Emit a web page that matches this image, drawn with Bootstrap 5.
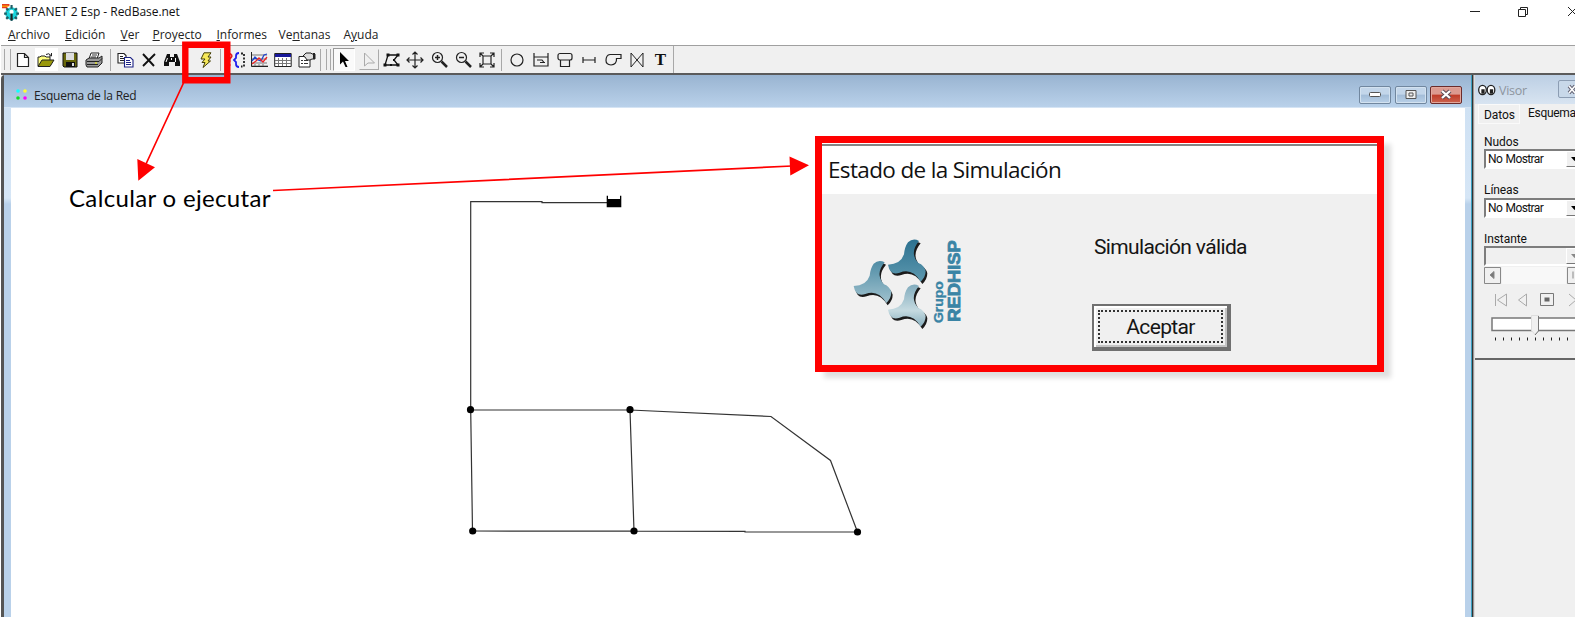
<!DOCTYPE html>
<html lang="es">
<head>
<meta charset="utf-8">
<title>EPANET 2 Esp - RedBase.net</title>
<link href="https://cdn.jsdelivr.net/npm/bootstrap@5.3.0/dist/css/bootstrap.min.css" rel="stylesheet">
<style>
body{width:1575px;height:627px;overflow:hidden;background:#fff;color:#111;font:12px/1 "Open Sans","Noto Sans",sans-serif}
svg{display:block;flex:none;overflow:visible}
.shell{height:617px;padding-left:1px}
.titlebar{height:25px;padding:0 3px 1px 1px;font-size:12px}
.titlebar .cap{letter-spacing:-.03px;margin-left:5px}
.menubar{height:20px;padding-left:7px;color:#222;font-size:12px}
.menubar span{display:block;flex:none;white-space:nowrap}
.toolbar-strip{height:28px;background:#f0f0f0;border-top:1px solid #a0a0a0;padding-left:3px}
.grips{width:7px;height:21px;border-left:1px solid #a8a8a8;border-right:1px solid #a8a8a8;flex:none}
.slot{width:23.6px;height:23px;display:flex;align-items:center;justify-content:center;flex:none}
.slot.w{width:24px}
.vsep{width:1px;height:22px;background:#a8a8a8;flex:none}
.mdi{height:544px;border-top:2px solid #5b5b5b;background:#f0f0f0}
.child{width:1471px;border-left:3px solid #555;background:#b9d1ea;box-shadow:inset 1px 0 #dfeaf5;border-top-left-radius:4px}
.child-title{height:33px;background:linear-gradient(#99b4d1,#b9d1ea);padding:0 9px 0 12px;border-bottom:1px solid #d5e4f4}
.child-title .cap{font-size:12px;letter-spacing:-.22px;color:#222;margin-left:6px;padding-top:9px}
.mdibtn{width:32px;height:18px;border:1px solid #71879f;border-radius:2px;background:linear-gradient(#c3d6ea 45%,#a3bdd8 50%,#b9d0e8);box-shadow:inset 0 0 0 1px #d3e2f0;display:flex;align-items:center;justify-content:center}
.mdibtn.x{background:linear-gradient(#dc9a90 45%,#bf3b28 50%,#cc6450);border-color:#6b2b2b;box-shadow:inset 0 0 0 1px #e2a79c}
.frame{padding:0 6px 0 7px;background:linear-gradient(#cfe1f3 0,#d6e6f6 90px,#b9d1ea 96px)}
.sheet{background:#fff}
.divider{width:4px;background:linear-gradient(90deg,#3aa0c0 0 1px,#333 1px 2.500px,#999 2.500px 3px,#ddd 3px);flex:none}
.dock{width:100px;font-family:Roboto,"Liberation Sans",sans-serif;font-size:12px;letter-spacing:-.08px;color:#111}
.visor{height:285px;border-bottom:2px solid #666;padding-left:3px;overflow:hidden}
.visor>*{width:107px}
.vtitle{height:29px;padding-top:1px;background:linear-gradient(#bccfe4,#d8e4f1);margin-left:-3px;padding-left:3px;color:#8d959e;font:12.5px "Open Sans",sans-serif;letter-spacing:-.3px}
.vclose{width:26px;height:18px;border:1px solid #8c9db3;border-radius:2px;background:#c8d8e9;margin-left:31px;margin-top:-2px}
.lbl{height:13px;padding-left:6px;white-space:nowrap}
.combo{height:20px;width:101px;margin-left:6px;border:2px solid;border-color:#7d7d7d #fff #fff #7d7d7d;background:#fff;padding-left:2px}
.combo span{letter-spacing:-.6px;word-spacing:1px;white-space:nowrap}
.combo.off{background:#f0f0f0}
.dropbtn{width:17px;background:#f0f0f0;border:1px solid;border-color:#fff #777 #777 #fff;margin-left:auto;flex:none}
.overlay-art{position:absolute;left:0;top:0;z-index:3;pointer-events:none}
.callout-label{position:absolute;left:69px;top:184px;z-index:4;font:24px/28px Lato,sans-serif;letter-spacing:.34px;color:#000;white-space:nowrap}
.simbox{position:absolute;z-index:4;left:815px;top:136px;width:569px;height:236px;border:7px solid #f00;background:#f0f0f0;box-shadow:8px 7px 5px -1px rgba(0,0,0,.13)}
.simtitle{height:51px;background:linear-gradient(#fff 1px,#858585 1px 3px,#fff 3px);padding:3px 0 0 6px;font-size:22.5px;letter-spacing:-.64px}
.simfont{font-family:Roboto,"Liberation Sans",sans-serif;font-size:21px;letter-spacing:-.65px;color:#151515}
.okbtn{width:139px;height:47px;border:2px solid #707070;border-right-width:4px;border-bottom-width:4px;border-radius:0;padding:4px;background:#f0f0f0;box-shadow:inset 2px 2px #fff,inset -2px -2px #c4c4c4}
.okbtn span{border:2px dotted #333;width:100%;height:100%;padding-top:2px}
</style>
</head>
<body class="position-relative">
<main class="shell d-flex flex-column">
  <header class="titlebar d-flex align-items-center">
    <svg width="17" height="17" viewBox="0 0 16 16"><circle cx="9" cy="9" r="6" fill="#19c5cc"/><path d="M9 1v15M2 9h14M4 4l10 10M14 4 4 14" stroke="#215d65" stroke-width="2"/><circle cx="9" cy="9" r="4.500" fill="#19d5dc"/><circle cx="9" cy="7.500" r="2" fill="#fff"/><path d="M9 9v6" stroke="#222" stroke-width="2"/><path d="M0 1h7M0 3h5" stroke="#e53b20" stroke-width="2"/><path d="M0 2h6" stroke="#ffc400"/></svg>
    <span class="cap">EPANET 2 Esp - RedBase.net</span>
    <svg class="ms-auto" width="102" height="14" viewBox="0 0 102 14" fill="none" stroke="#222"><path d="M0 6.5h10M48.500 4.500h7v7h-7zM50.500 4.500v-2h7v7h-2M98 2l9 9M107 2l-9 9"/></svg>
  </header>
  <nav class="menubar d-flex align-items-center">
    <span style="width:57px"><u>A</u>rchivo</span><span style="width:55.500px"><u>E</u>dición</span><span style="width:32px"><u>V</u>er</span><span style="width:64px"><u>P</u>royecto</span><span style="width:62px"><u>I</u>nformes</span><span style="width:65px">Ve<u>n</u>tanas</span><span>A<u>y</u>uda</span>
  </nav>
  <div class="toolbar-strip d-flex align-items-center">
    <div class="grips"></div>
    <div class="slot"><svg width="16" height="16" viewBox="0 0 16 16" fill="#fff" stroke="#222"><path d="M2.500 1.500h7l4 4v9h-11zM9.500 1.500v4h4" stroke-width="1.2"/></svg></div>
    <div class="slot bg-white"><svg width="18" height="16" viewBox="0 0 18 16"><path d="M1 14V5h2l1-1h4l1 1h4v3" fill="#ffff80" stroke="#222"/><path d="M1 14.500 5 8h12l-4 6.500z" fill="#99980a" stroke="#222"/><path d="M9 2.500q3-2 5 1M14.500 1v3H12" fill="none" stroke="#222"/></svg></div>
    <div class="slot"><svg width="16" height="16" viewBox="0 0 16 16"><path d="M1 1h14v14H2l-1-1z" fill="#68670a" stroke="#111"/><path d="M4 1h8v7H4z" fill="#ddd"/><path d="M4 10h9v5H4z" fill="#111"/><path d="M10 11h2v3h-2z" fill="#ddd"/></svg></div>
    <div class="slot"><svg width="18" height="16" viewBox="0 0 18 16"><path d="m6 1 8 0-2 6H4z" fill="#fff" stroke="#222"/><path d="M7 3h5M6 5h5" stroke="#333"/><path d="M1 8l3-2h10l3-2v7l-4 4H2l-1-2z" fill="#999" stroke="#222"/><path d="M2 9.500h12l3-3M2 12.500h11" stroke="#222" fill="none"/><path d="M10 11h2" stroke="#ff0"/></svg></div>
    <div class="vsep" style="margin:0 2px 0 5px"></div>
    <div class="slot"><svg width="17" height="16" viewBox="0 0 17 16" fill="#fff" stroke-width="1.1"><path d="M1 1.500h6l2 2V11H1z" stroke="#222"/><path d="M3 4.500h3M3 6.500h4M3 8.500h4" stroke="#222"/><path d="M7.500 5.500h6l2.500 2.500v7H7.500z" stroke="#1d2385"/><path d="M9 8.500h4M9 10.500h5M9 12.500h5" stroke="#1d2385"/></svg></div>
    <div class="slot"><svg width="16" height="16" viewBox="0 0 16 16" stroke="#111" stroke-width="1.9"><path d="M2 2 13 14M14 2 2 14"/></svg></div>
    <div class="slot"><svg width="18" height="16" viewBox="0 0 18 16"><path d="M4 2h3v3h4V2h3l3 8v4h-5v-4H6v4H1v-4z" fill="#111"/><path d="M4.500 6 3 10M12.500 6v4M8.500 6v2" stroke="#fff"/></svg></div>
    <div class="slot" style="margin-left:10px"><svg width="16" height="16" viewBox="0 0 16 16"><path d="M6 .8h7L10 5h3l-3 4h2.500L5 15.500 7 10.500H4L7 7H3z" fill="#f7e95a" stroke="#443f08"/></svg></div>
    <div class="vsep" style="margin:0 2px"></div>
    <div class="slot w"><svg width="22" height="16" viewBox="0 0 22 16" fill="none" stroke-width="1.8"><path d="M2.500 4q1-3 4-2 3 2-1 5v3M5.500 12v2" stroke="#e22020"/><path d="M15 1q-3 0-3 3v2l-2 2 2 2v2q0 3 3 3" stroke="#2020ee"/><path d="M17 1.500h3v13h-3" stroke="#222" stroke-dasharray="2 1.500"/></svg></div>
    <div class="slot w"><svg width="18" height="16" viewBox="0 0 18 16" fill="none"><path d="M1.500 0v14H18M1 3h16M1 7h16M1 11h16M5 12v3M9 12v3M13 12v3" stroke="#777"/><path d="M1.500 0v14.500H18" stroke="#222"/><path d="m2 9 3-4 3 3 3 1 3-6 3-1" stroke="#24c" stroke-width="1.300"/><path d="m2 12 4-3 3-3 4 4 4-5" stroke="#e22" stroke-width="1.300"/></svg></div>
    <div class="slot w"><svg width="18" height="16" viewBox="0 0 18 16"><path d="M.7 1.500h16.500v13H.7z" fill="#fff" stroke="#222"/><path d="M1 2h16v3H1z" fill="#18189a"/><path d="M4.500 6v8M8.500 6v8M12.500 6v8M1 8.500h16M1 11.500h16" stroke="#777"/></svg></div>
    <div class="slot w"><svg width="18" height="16" viewBox="0 0 18 16"><path d="M1 4.500h11V15H1z" fill="#fff" stroke="#222"/><path d="M3 8.500h2M6 8.500h4M3 11.500h2M6 11.500h4" stroke="#333"/><path d="M5 4 8 1h5l1 1h3v5h-3l-2 1H9L7 5z" fill="#ddd" stroke="#222"/><path d="M15 1h2v6h-2z" fill="#222"/></svg></div>
    <div class="vsep" style="margin-left:1px"></div>
    <div class="grips" style="width:5px;margin:0 2px 0 5px"></div>
    <div class="slot" style="background:#fafafa;border:1px solid;border-color:#999 #fff #fff #999;width:22px"><svg width="12" height="16" viewBox="0 0 12 16"><path d="M2 0v12.500l3-3L7.500 15h2L7 9h4z" fill="#000"/></svg></div>
    <div class="slot" style="width:20px;height:21px;margin:0 1px 0 4px;border:1px solid;border-color:#f0f0f0 #aaa #aaa #f0f0f0"><svg width="12" height="16" viewBox="0 0 12 16"><path d="M1.500 1v13L5 11h6.500z" fill="none" stroke="#aaa"/></svg></div>
    <div class="slot"><svg width="17" height="16" viewBox="0 0 17 16" fill="none" stroke="#111" stroke-width="1.300"><path d="M5 3h10l-4 5 4 5H2L5 3"/><path d="M3.500 1.500h3v3h-3zM13.500 1.500h3v3h-3zM.5 11.500h3v3h-3zM13.500 11.500h3v3h-3zM10 7h2v2h-2zM7 12h2v2H7z" fill="#111" stroke="none"/></svg></div>
    <div class="slot w"><svg width="18" height="18" viewBox="0 0 18 18" fill="none" stroke="#222" stroke-width="1.200"><path d="M1 9h16M9 1v16M6.500 3.500 9 1l2.500 2.500M6.500 14.500 9 17l2.500-2.500M3.500 6.500 1 9l2.500 2.500M14.500 6.500 17 9l-2.500 2.500"/></svg></div>
    <div class="slot w"><svg width="17" height="17" viewBox="0 0 17 17" fill="none" stroke="#222"><circle cx="6.500" cy="6.500" r="5" stroke-width="1.200"/><path d="M4 6.500h5M6.500 4v5" stroke-width="1.500"/><path d="m10.500 10.500 5.500 5.500" stroke-width="2.500"/></svg></div>
    <div class="slot w"><svg width="17" height="17" viewBox="0 0 17 17" fill="none" stroke="#222"><circle cx="6.500" cy="6.500" r="5" stroke-width="1.200"/><path d="M4 6.500h5" stroke-width="1.500"/><path d="m10.500 10.500 5.500 5.500" stroke-width="2.500"/></svg></div>
    <div class="slot w"><svg width="16" height="16" viewBox="0 0 16 16" fill="none" stroke="#222" stroke-width="1.200"><path d="M4 4h8v8H4zM1 5V1h4M11 1h4v4M15 11v4h-4M5 15H1v-4M1 1l3 3M15 1l-3 3M1 15l3-3M15 15l-3-3"/></svg></div>
    <div class="vsep" style="margin:0 3px 0 2px"></div>
    <div class="slot w"><svg width="14" height="14" viewBox="0 0 14 14" fill="none" stroke="#222"><circle cx="7" cy="7" r="6" stroke-width="1.200"/></svg></div>
    <div class="slot w"><svg width="16" height="14" viewBox="0 0 16 14" fill="none" stroke="#222" stroke-width="1.200"><path d="M1 0v13h14V0M1 4h14M4 7h5l2 2.500M7 9.500h5"/></svg></div>
    <div class="slot w"><svg width="16" height="16" viewBox="0 0 16 16" fill="none" stroke="#222" stroke-width="1.200"><rect x="1" y="1.500" width="14" height="6.500" rx="2"/><path d="M3.500 8v6.500h9V8"/></svg></div>
    <div class="slot w"><svg width="14" height="8" viewBox="0 0 14 8" fill="none" stroke="#222" stroke-width="1.200"><path d="M1 1v6M13 1v6M1 4h12"/></svg></div>
    <div class="slot w"><svg width="17" height="14" viewBox="0 0 17 14" fill="none" stroke="#222" stroke-width="1.200"><path d="M5 1.500h11v4h-4.500q.500 6-5.500 6.500Q1 11.500 1 7.500 1 2 5 1.500z"/></svg></div>
    <div class="slot w"><svg width="14" height="14" viewBox="0 0 14 14" fill="none" stroke="#222"><path d="M1 0v14L13 0v14z"/></svg></div>
    <div class="slot" style="width:22px;font:bold 17px 'Liberation Serif',serif">T</div>
    <div class="vsep" style="height:27px;margin-left:2px"></div>
  </div>
  <section class="mdi d-flex">
    <div class="child d-flex flex-column">
      <div class="child-title d-flex align-items-center">
        <svg style="margin-top:7px" width="12" height="12" viewBox="0 0 12 12"><circle cx="2" cy="2" r="1.800" fill="#1ff"/><circle cx="9" cy="2" r="1.800" fill="#ff3"/><circle cx="2" cy="9" r="1.800" fill="#1d2"/><circle cx="9" cy="9" r="1.800" fill="#f0f"/></svg>
        <span class="cap">Esquema de la Red</span>
        <div class="ms-auto d-flex" style="padding-top:7px;gap:3.500px">
          <div class="mdibtn"><svg width="12" height="5" viewBox="0 0 12 5"><rect x=".5" y=".5" width="11" height="4" rx="1" fill="#fff" stroke="#555"/></svg></div>
          <div class="mdibtn"><svg width="12" height="9" viewBox="0 0 12 9"><path d="M1 .5h10v8H1zM4 3h4v3H4z" fill="#eee" stroke="#555"/></svg></div>
          <div class="mdibtn x"><svg width="12" height="9" viewBox="0 0 12 9"><path d="m2 1 8 7M10 1 2 8" stroke="#5b4b55" stroke-width="4.300"/><path d="m2 1 8 7M10 1 2 8" stroke="#fff" stroke-width="2.300"/></svg></div>
        </div>
      </div>
      <div class="frame d-flex flex-grow-1"><div class="sheet flex-grow-1"></div></div>
    </div>
    <div class="divider"></div>
    <aside class="dock">
      <div class="visor">
        <div class="vtitle d-flex align-items-center"><svg width="18" height="12" viewBox="0 0 18 12" fill="#fff" stroke="#222" stroke-width="1.300"><ellipse cx="4.500" cy="6" rx="3.800" ry="4.600"/><ellipse cx="13" cy="6" rx="3.800" ry="4.600"/><path d="M4 6h2v3H4zM12.500 6h2v3h-2z" fill="#222"/></svg><span style="margin-left:3px">Visor</span><div class="vclose d-flex align-items-center ps-2"><svg width="11" height="9" viewBox="0 0 11 9"><path d="m2 1 6 7M8 1 2 8" stroke="#667" stroke-width="3.500"/><path d="m2 1 6 7M8 1 2 8" stroke="#fff" stroke-width="1.500"/></svg></div></div>
        <div class="d-flex" style="height:32px"><div style="width:42px;height:20px;border:1px solid #fafafa;padding:4px 0 0 5px">Datos</div><div style="padding:3px 0 0 8px;letter-spacing:-.3px">Esquema</div></div>
        <div class="lbl">Nudos</div>
        <div class="combo d-flex align-items-center"><span>No Mostrar</span><div class="dropbtn align-self-stretch d-flex align-items-center justify-content-center"><svg width="7" height="4" viewBox="0 0 7 4"><path d="M0 0h7L3.500 4z"/></svg></div></div>
        <div class="lbl" style="margin-top:15px">Líneas</div>
        <div class="combo d-flex align-items-center" style="margin-top:1px"><span>No Mostrar</span><div class="dropbtn align-self-stretch d-flex align-items-center justify-content-center"><svg width="7" height="4" viewBox="0 0 7 4"><path d="M0 0h7L3.500 4z"/></svg></div></div>
        <div class="lbl" style="margin-top:15px">Instante</div>
        <div class="combo off d-flex"><div class="dropbtn d-flex align-items-center justify-content-center"><svg width="7" height="4" viewBox="0 0 7 4"><path d="M0 0h7L3.500 4z" fill="#888"/></svg></div></div>
        <svg style="width:110px" height="92" viewBox="1478 266 110 92"><path d="M1502 267h64v17h-64z" fill="#f8f8f8"/><g fill="#f0f0f0" stroke="#888"><path d="M1484.500 267.500h16v16h-16zM1567.500 267.500h16v16h-16z"/><path d="M1494 271.500v7l-4-3.500zM1573 271.500v7" fill="#777"/></g><g fill="none" stroke="#aaa"><path d="M1495.500 294v12M1506.500 294v12l-9-6zM1526.500 294v12l-8-6zM1569 294l7 6-7 6"/><path d="M1540.500 293.500h13v12h-13z" stroke="#777"/></g><path d="M1544.500 297.500h5v4h-5z" fill="#666"/><path d="M1492 318H1590v12.500h-98z" fill="#fff" stroke="#777" stroke-width="1.500"/><path d="M1531.500 315.500h7v15l-3.500 4-3.500-4z" fill="#f0f0f0" stroke="#ddd"/><path d="M1538.500 316v15l-3.500 4" fill="none" stroke="#777"/><path d="M1495 339h80" stroke="#222" stroke-width="3" stroke-dasharray="1 7"/></svg>
      </div>
    </aside>
  </section>
</main>

<svg class="overlay-art" width="1575" height="627" viewBox="0 0 1575 627">
  <g fill="none" stroke="#333" stroke-width="1.200"><path d="M607 202.600H542V201.700H470.700V410L472.500 531 634 531.200 745 531.300V532H857.500L830.500 460.500 771 416.500 630 410H470.500M630 410l4 121"/></g>
  <path d="M606.700 195.700h1.300v3.300h12v-3.300h1.300v11.600h-14.600z"/>
  <g><circle cx="470.500" cy="409.700" r="3.600"/><circle cx="630" cy="409.700" r="3.600"/><circle cx="472.700" cy="531" r="3.600"/><circle cx="634" cy="531" r="3.600"/><circle cx="857.500" cy="532" r="3.600"/></g>
  <path d="M185.300 44.800h42v35.400h-42z" fill="none" stroke="#f00" stroke-width="6.400"/>
  <path d="M183.500 83 146 164M273 190.500 792 166" stroke="#f00" stroke-width="1.700"/>
  <path d="M138.300 180.700 137.300 159 155 167.300zM809 165.300 789.500 156.500 790.300 175.500z" fill="#f00"/>
</svg>
<div class="callout-label">Calcular o ejecutar</div>

<div class="simbox">
  <div class="simtitle d-flex align-items-center"><span>Estado de la Simulación</span></div>
  <div class="d-flex simfont" style="height:171px">
    <svg style="margin:43px 0 0 31px" width="110" height="94" viewBox="130 320 330 280">
      <defs>
        <path id="blade" d="M330 332Q312 322 297 336 287 350 285 372 275 402 237 403 243 437 272 427 310 412 335 454 350 440 350 422 346 405 328 398 300 368 330 332z"/>
        <linearGradient id="steel" gradientUnits="userSpaceOnUse" x1="0" y1="325" x2="0" y2="460"><stop offset="0" stop-color="#2b708f"/><stop offset="1" stop-color="#5f9ab0"/></linearGradient>
        <linearGradient id="mid" gradientUnits="userSpaceOnUse" x1="0" y1="325" x2="0" y2="460"><stop offset="0" stop-color="#4d8ba4"/><stop offset="1" stop-color="#a4c4d0"/></linearGradient>
        <linearGradient id="pale" gradientUnits="userSpaceOnUse" x1="0" y1="325" x2="0" y2="460"><stop offset="0" stop-color="#7faabc"/><stop offset=".6" stop-color="#c5dae0"/><stop offset="1" stop-color="#80aaba"/></linearGradient>
      </defs>
      <g><use href="#blade" x="3" y="6" fill="#1b1b1b"/><use href="#blade" x="-2" y="-1" fill="url(#steel)"/></g>
      <g transform="translate(-103 64)"><use href="#blade" x="2" y="6" fill="#1b1b1b"/><use href="#blade" x="-2" y="-1" fill="url(#mid)"/></g>
      <g transform="translate(0 135)"><use href="#blade" x="3" y="6" fill="#1b1b1b"/><use href="#blade" x="-2" y="-1" fill="url(#pale)"/></g>
      <g fill="#3a84a5" stroke="#3a84a5" font-family="Liberation Sans,sans-serif" font-weight="bold" letter-spacing="0"><text transform="translate(401 577) rotate(-90)" font-size="36" stroke-width="1" textLength="125" lengthAdjust="spacingAndGlyphs">Grupo</text><text transform="translate(452 573) rotate(-90)" font-size="52" stroke-width="2.500" textLength="244" lengthAdjust="spacingAndGlyphs">REDHISP</text></g>
    </svg>
    <div class="d-flex flex-column" style="margin-left:129px;padding-top:43px">
      <span style="padding-left:2px;height:67px">Simulación válida</span>
      <button class="okbtn simfont d-flex"><span class="d-flex align-items-center justify-content-center">Aceptar</span></button>
    </div>
  </div>
</div>
<script src="https://cdn.jsdelivr.net/npm/bootstrap@5.3.0/dist/js/bootstrap.bundle.min.js"></script>
</body>
</html>
